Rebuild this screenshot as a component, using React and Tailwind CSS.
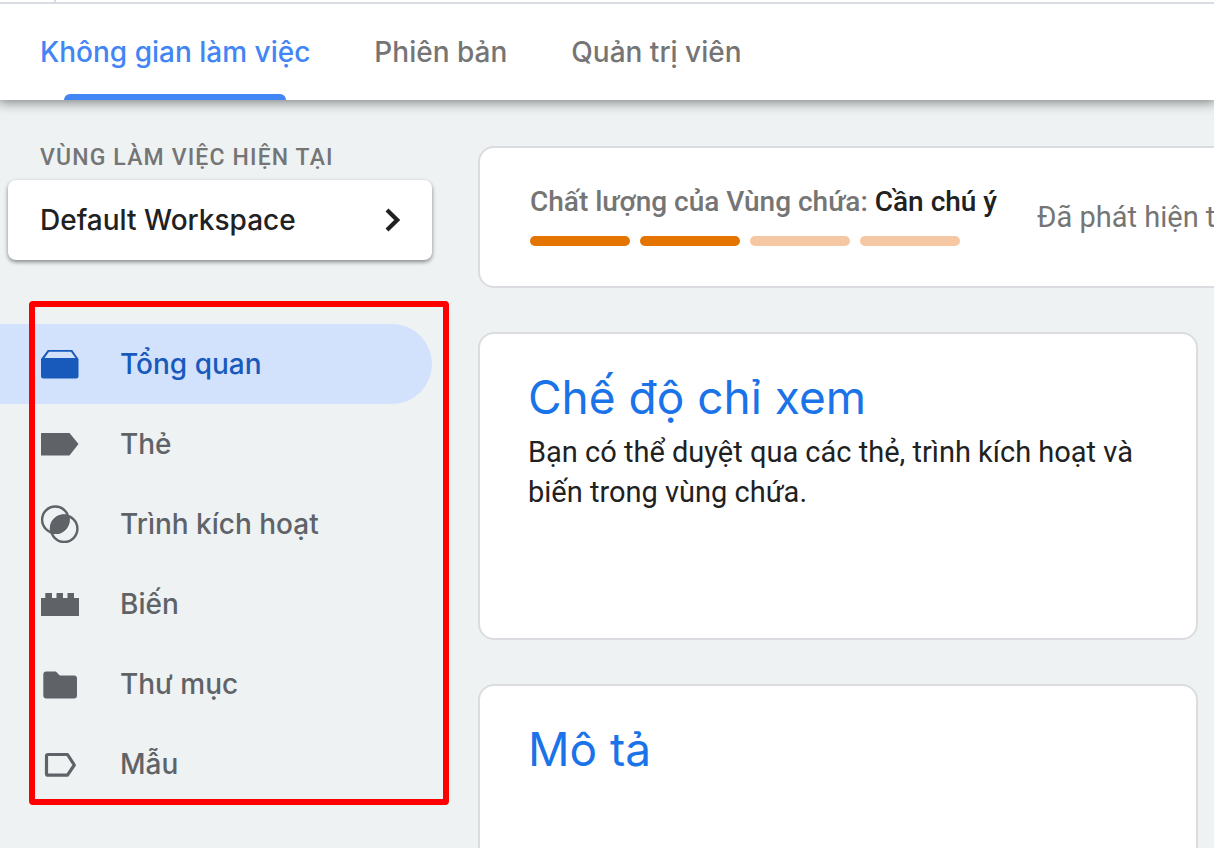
const TABS = ["Không gian làm việc", "Phiên bản", "Quản trị viên"];

function OverviewIcon() {
  return (
    <svg viewBox="0 0 40 40" className="size-10 shrink-0" aria-hidden="true">
      <path d="M7.800 6h24.400l6.300 9V32a2.500 2.500 0 0 1-2.500 2.500H3.500A2.500 2.500 0 0 1 1 32V15Z" fill="currentColor" />
      <path d="M9 7.800h22l4.500 6.200H4.500Z" fill="#d2e1fc" />
    </svg>
  );
}

function TagIcon() {
  return (
    <svg viewBox="0 0 40 40" className="size-10 shrink-0" aria-hidden="true">
      <path d="M1.600 9H29.500L38.500 20 29.500 31.500H1.600a.6.6 0 0 1-.6-.6V9.600A.6.6 0 0 1 1.600 9Z" fill="currentColor" />
    </svg>
  );
}

function TriggerIcon() {
  return (
    <svg viewBox="0 0 40 40" className="size-10 shrink-0" aria-hidden="true">
      <clipPath id="trigger-lens">
        <circle cx="15.300" cy="15.700" r="14.300" />
      </clipPath>
      <g fill="none" stroke="currentColor" strokeWidth="2.400">
        <circle cx="15.300" cy="15.700" r="13.200" />
        <circle cx="24.200" cy="24.700" r="13.200" />
      </g>
      <circle cx="24.200" cy="24.700" r="14.300" fill="currentColor" clipPath="url(#trigger-lens)" />
    </svg>
  );
}

function VariableIcon() {
  return (
    <svg viewBox="0 0 40 40" className="size-10 shrink-0" aria-hidden="true">
      <path d="M1 14h4.300V9h6.700v5h4.500V9h6.500v5h4.500V9h6.500v5h5v18H1Z" fill="currentColor" />
    </svg>
  );
}

function FolderIcon() {
  return (
    <svg viewBox="0 0 40 40" className="size-10 shrink-0" aria-hidden="true">
      <path d="M6.300 7.500h9.500l4 4H34a3 3 0 0 1 3 3V31.500a3 3 0 0 1-3 3H6.300a3 3 0 0 1-3-3v-21a3 3 0 0 1 3-3Z" fill="currentColor" />
    </svg>
  );
}

function TemplateIcon() {
  return (
    <svg viewBox="0 0 40 40" className="size-10 shrink-0" aria-hidden="true">
      <path d="M8 10.500h19.500L34.300 21 27.500 31.200H8A1.500 1.500 0 0 1 6.500 29.700V12A1.500 1.500 0 0 1 8 10.500Z" fill="none" stroke="currentColor" strokeWidth="3.200" strokeLinejoin="round" />
    </svg>
  );
}

const NAV = [
  { label: "Tổng quan", Icon: OverviewIcon, active: true },
  { label: "Thẻ", Icon: TagIcon },
  { label: "Trình kích hoạt", Icon: TriggerIcon },
  { label: "Biến", Icon: VariableIcon },
  { label: "Thư mục", Icon: FolderIcon },
  { label: "Mẫu", Icon: TemplateIcon },
];

const QUALITY = [true, true, false, false];

function Header() {
  return (
    <header className="relative z-10 shrink-0 bg-white shadow-[0_0_12px_2px_rgba(0,0,0,0.5)]">
      <div className="h-1 border-b-2 border-[#d8dce3] pl-[54px]">
        <div className="h-0.5 w-0.5 bg-[#d8dce3]" />
      </div>
      <nav className="flex h-24 gap-16 pl-10 text-[28px] font-medium">
        {TABS.map((tab, i) => (
          <a
            key={tab}
            href="#"
            className={
              i === 0
                ? "relative flex items-center whitespace-nowrap text-[#4285f4]"
                : "flex items-center whitespace-nowrap text-[#757575]"
            }
          >
            {tab}
            {i === 0 && <span className="absolute inset-x-6 bottom-0 h-1.5 rounded-t-md bg-[#4285f4]" />}
          </a>
        ))}
      </nav>
    </header>
  );
}

function Sidebar() {
  return (
    <aside className="w-[432px] shrink-0 pt-10">
      <h2 className="h-10 pl-10 pt-1 font-[Roboto] text-[23px] leading-[28px] font-medium tracking-wider text-[#757575]">
        VÙNG LÀM VIỆC HIỆN TẠI
      </h2>
      <div className="pl-2">
        <button className="flex h-20 w-full items-center justify-between rounded-lg bg-white pr-8 pl-8 text-[28px] font-medium text-[#212121] shadow-[0_2px_4px_rgba(0,0,0,0.45)]">
          Default Workspace
          <svg viewBox="0 0 16 24" className="h-6 w-4" fill="none" stroke="currentColor" strokeWidth="4.200" aria-hidden="true">
            <path d="M3 2 13.200 12 3 22" />
          </svg>
        </button>
      </div>
      <nav className="relative mt-16">
        {NAV.map(({ label, Icon, active }) => (
          <a
            key={label}
            href="#"
            className={
              active
                ? "flex h-20 items-center gap-10 rounded-r-full bg-[#d2e1fc] pl-10 text-[28px] font-medium text-[#185abc]"
                : "flex h-20 items-center gap-10 pl-10 text-[28px] font-medium text-[#5f6368]"
            }
          >
            <Icon />
            {label}
          </a>
        ))}
        <div className="pointer-events-none absolute -top-[23px] -right-[17px] -bottom-px left-[29px] rounded border-[6px] border-[#ff0000]" />
      </nav>
    </aside>
  );
}

function Main() {
  return (
    <main className="flex min-w-0 flex-1 flex-col gap-11 pt-[46px] pr-4">
      <section className="-mr-4 flex h-[142px] shrink-0 items-center gap-10 overflow-hidden rounded-l-2xl border-2 border-r-0 border-[#dadce0] bg-white pl-[50px] font-[Roboto] text-[28px] leading-10 whitespace-nowrap">
        <div className="pb-1.5">
          <p className="font-medium text-[#757575]">
            Chất lượng của Vùng chứa: <span className="text-[#212121]">Cần chú ý</span>
          </p>
          <div className="mt-3.5 flex gap-2.5">
            {QUALITY.map((filled, i) => (
              <div
                key={i}
                className={
                  filled
                    ? "h-2.5 w-25 rounded-full bg-[#e37400]"
                    : "h-2.5 w-25 rounded-full bg-[#f6c7a3]"
                }
              />
            ))}
          </div>
        </div>
        <p className="text-[29px] text-[#757575]">Đã phát hiện t</p>
      </section>
      <section className="h-[308px] shrink-0 rounded-2xl border-2 border-[#dadce0] bg-white px-12 pt-8">
        <h1 className="mb-1 text-[46px] leading-[62px] text-[#1a73e8]">Chế độ chỉ xem</h1>
        <p className="font-[Roboto] text-[29px] leading-10 text-[#212121]">
          Bạn có thể duyệt qua các thẻ, trình kích hoạt và biến trong vùng chứa.
        </p>
      </section>
      <section className="h-[308px] shrink-0 rounded-2xl border-2 border-[#dadce0] bg-white px-12 pt-8">
        <h1 className="text-[46px] leading-[62px] text-[#1a73e8]">Mô tả</h1>
      </section>
    </main>
  );
}

export default function App() {
  return (
    <div className="flex h-screen flex-col overflow-hidden bg-[#eef2f3] font-[Inter,sans-serif]">
      <Header />
      <div className="flex min-h-0 flex-1 gap-[46px]">
        <Sidebar />
        <Main />
      </div>
    </div>
  );
}
